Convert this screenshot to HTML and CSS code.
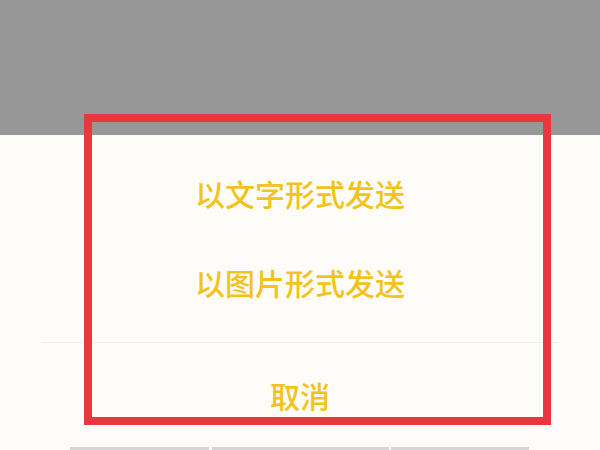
FILE: index.html
```html
<!DOCTYPE html>
<html lang="zh-CN">
<head>
<meta charset="utf-8">
<title>发送方式</title>
<link rel="stylesheet" href="styles.css">
</head>
<body>
<div class="screen">
  <div class="mask"></div>
  <div class="sheet">
    <div class="options">
      <div class="option">以文字形式发送</div>
      <div class="option">以图片形式发送</div>
    </div>
    <div class="divider"></div>
    <div class="option cancel">取消</div>
    <div class="tabs">
      <span class="tab tab-a"></span>
      <span class="tab tab-b"></span>
      <span class="tab tab-c"></span>
    </div>
  </div>
  <div class="highlight"></div>
</div>
</body>
</html>
```
FILE: styles.css
```css
html, body {
  margin: 0;
  padding: 0;
}
body {
  width: 600px;
  height: 450px;
  overflow: hidden;
  font-family: "Noto Sans CJK SC", "Noto Sans", sans-serif;
}
.screen {
  position: relative;
  width: 600px;
  height: 450px;
  display: flex;
  flex-direction: column;
}
.mask {
  height: 135px;
  background: #979797;
  flex: none;
}
.sheet {
  flex: 1;
  background: #fdfcf8;
  display: flex;
  flex-direction: column;
}
.options {
  padding-top: 13px;
  display: flex;
  flex-direction: column;
}
.option {
  height: 89px;
  display: flex;
  align-items: center;
  justify-content: center;
  font-size: 30px;
  font-weight: 500;
  color: #f3c31c;
  line-height: 1;
}
.divider {
  margin: 16px 42px 0 42px;
  height: 1px;
  background: #efeee9;
}
.cancel {
  height: 104px;
}
.tabs {
  margin-top: auto;
  display: flex;
  padding-left: 70px;
  height: 4px;
}
.tab {
  background: #d6d6d6;
  height: 4px;
}
.tab-a { width: 139px; margin-right: 3px; }
.tab-b { width: 177px; margin-right: 2px; }
.tab-c { width: 138px; }
.highlight {
  position: absolute;
  left: 84px;
  top: 114px;
  width: 467px;
  height: 311px;
  border: 8px solid #e8373d;
  box-sizing: border-box;
}
```
